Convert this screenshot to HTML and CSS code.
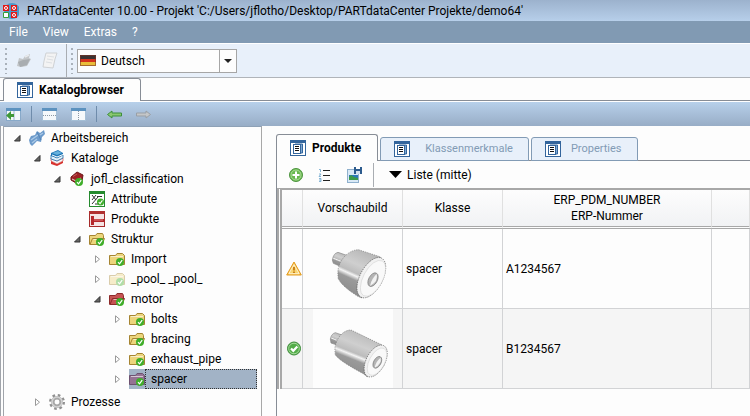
FILE: index.html
```html
<!DOCTYPE html>
<html lang="de">

<head>
  <meta charset="UTF-8">
  <meta name="viewport" content="width=device-width, initial-scale=1.0">
  <title>PARTdataCenter</title>
  <link rel="stylesheet" href="styles.css">
</head>

<body>

  <!-- shared icons -->
  <svg class="sprite" aria-hidden="true">
    <symbol id="check" viewBox="0 0 8 8">
      <circle cx="4" cy="4" r="4" fill="#3fae2a"/>
      <path d="M2 4.2 L3.5 5.8 L6.2 2.2" fill="none" stroke="#fff" stroke-width="1.2"/>
    </symbol>
    <symbol id="folder" viewBox="0 0 16 16">
      <path d="M.5 13.500 V4.500 H6.500 L8 2.500 H13.500 L15.500 4.500 V13.500 Z" fill="currentColor"/>
      <path d="M2 5.500 H14" stroke="#ffffff99"/>
      <use href="#check" x="7" y="7" width="8" height="8" stroke="none"/>
    </symbol>
    <symbol id="folder-open" viewBox="0 0 16 16">
      <path d="M.5 13.500 V4.500 H6.500 L8 2.500 H13.500 L14.500 4.500 V8" fill="currentColor"/>
      <path d="M1 13.500 L3.500 7.500 H15.500 L13 13.500 Z" fill="currentColor"/>
      <path d="M4.500 8.500 H14" stroke="#ffffff99"/>
      <use href="#check" x="7" y="7" width="8" height="8" stroke="none"/>
    </symbol>
    <symbol id="page" viewBox="0 0 16 16">
      <rect x=".5" y=".5" width="15" height="15" fill="#fff" stroke="#33659c"/>
      <rect width="16" height="3" fill="#33659c"/>
      <path d="M5 4 H12.500 V13 H11" fill="#7fa9d3" stroke="#33659c"/>
      <rect x="3.500" y="4.500" width="7" height="9" fill="#fff" stroke="#33659c"/>
      <path d="M5 6.500 H9 M5 8.500 H9 M5 10.500 H9" stroke="#111"/>
    </symbol>
    <symbol id="open" viewBox="0 0 8 8">
      <path d="M1.500 7 L7 1.500 V7 Z" fill="#666" stroke="#333"/>
    </symbol>
    <symbol id="closed" viewBox="0 0 8 8">
      <path d="M2.500 .8 L6.500 4.200 L2.500 7.600 Z" fill="#fff" stroke="#999"/>
    </symbol>
    <symbol id="gear" viewBox="0 0 16 16">
      <circle cx="8" cy="8" r="6.500" fill="none" stroke="#909090" stroke-width="3" stroke-dasharray="2.500 2.600"/>
      <circle cx="8" cy="8" r="4.200" fill="none" stroke="#a8a8a8" stroke-width="3.500"/>
      <circle cx="8" cy="8" r="5" fill="none" stroke="#d4d4d4" stroke-width="1.500"/>
    </symbol>
  </svg>

  <header class="titlebar">
    <svg width="16" height="16" viewBox="0 0 16 16">
      <circle cx="9" cy="8" r="8" fill="#4b9ac9"/>
      <path d="M0 2 H6 V8 H0 Z M8 2 H14 V8 H8 Z M8 9 H14 V15 H8 Z" fill="#e01818"/>
      <path d="M.5 9.500 H5.500 V14.500 H.5 Z" fill="#fff" stroke="#35a03a"/>
      <g fill="none" stroke="#fff"><circle cx="3" cy="5" r="1.500"/><circle cx="11" cy="5" r="1.500"/><circle cx="11" cy="12" r="1.500"/></g>
    </svg>
    <span>PARTdataCenter 10.00 - Projekt 'C:/Users/jflotho/Desktop/PARTdataCenter Projekte/demo64'</span>
  </header>

  <nav class="menu">
    <button>File</button>
    <button>View</button>
    <button>Extras</button>
    <button>?</button>
  </nav>

  <div class="toolbar">
    <span class="grip"></span>
    <button class="tool" aria-label="Öffnen">
      <svg width="16" height="16" viewBox="0 0 16 16">
        <path d="M1 13 L3 5 L7 6 L9 3 L14 1 L13 5 L15 6 L11 13 L5 14 Z" fill="#c3c6c9"/>
        <path d="M2 9 L7 7 L14 6 L11 12 L4 14 Z" fill="#a9adb0"/>
        <path d="M9 4 L13 2" stroke="#e8eaec" stroke-width="1.500"/>
      </svg>
    </button>
    <button class="tool" aria-label="Dokument">
      <svg width="18" height="18" viewBox="0 0 18 18">
        <path d="M5 1 H16 L14 7 L12 16 L2 15 L3 9 Z" fill="#f3f3f3" stroke="#cfd2d5"/>
        <path d="M6 4 L13 5 M6 7 L12 8 M5 10 L11 11" stroke="#dcdfe2"/>
      </svg>
    </button>
    <span class="divider"></span>
    <span class="grip"></span>
    <div class="combo">
      <svg width="16" height="11" viewBox="0 0 16 11">
        <rect width="16" height="4" fill="#3b3232"/>
        <rect y="4" width="16" height="3" fill="#d3331d"/>
        <rect y="7" width="16" height="4" fill="#e9bd3a"/>
        <rect x=".5" y=".5" width="15" height="10" fill="none" stroke="#7a3325" opacity=".6"/>
      </svg>
      <select aria-label="Sprache">
        <option>Deutsch</option>
      </select>
      <span class="combo-arrow"><svg width="8" height="4" viewBox="0 0 8 4"><path d="M0 0 H8 L4 4 Z" fill="#222"/></svg></span>
    </div>
  </div>

  <div class="tabs main-tabs">
    <button class="tab active"><svg width="16" height="16"><use href="#page"/></svg>Katalogbrowser</button>
  </div>

  <div class="viewbar">
    <button aria-label="Baum">
      <svg width="15" height="13" viewBox="0 0 15 13">
        <rect x=".5" y=".5" width="14" height="12" fill="#f2f7fb" stroke="#88a9c9"/>
        <rect width="15" height="3" fill="#5c92bf"/>
        <path d="M8 3 V12" stroke="#9ab5cd"/>
        <path d="M0 7.500 L5 3 V6 H8 V9 H5 V12 Z" fill="#3f9838"/>
      </svg>
    </button>
    <span class="line"></span>
    <button aria-label="Horizontal teilen">
      <svg width="15" height="13" viewBox="0 0 15 13">
        <rect x=".5" y=".5" width="14" height="12" fill="#f6f9fb" stroke="#a5bfd6"/>
        <rect width="15" height="3" fill="#5c92bf"/>
        <path d="M1 7.500 H14" stroke="#8c98a4" stroke-dasharray="1 1"/>
      </svg>
    </button>
    <button aria-label="Vertikal teilen">
      <svg width="15" height="13" viewBox="0 0 15 13">
        <rect x=".5" y=".5" width="14" height="12" fill="#f6f9fb" stroke="#a5bfd6"/>
        <rect width="15" height="3" fill="#5c92bf"/>
        <path d="M7.500 3 V12" stroke="#8c98a4" stroke-dasharray="1 1"/>
      </svg>
    </button>
    <span class="line"></span>
    <button aria-label="Zurück">
      <svg width="15" height="9" viewBox="0 0 15 9"><path d="M.5 4.500 L5 1 V3 H14.500 V6 H5 V8 Z" fill="#8ac76f" stroke="#3d8f3a"/></svg>
    </button>
    <button aria-label="Vor">
      <svg width="15" height="9" viewBox="0 0 15 9"><path d="M14.500 4.500 L10 1 V3 H.5 V6 H10 V8 Z" fill="#c4c6c8" stroke="#999fa5"/></svg>
    </button>
  </div>

  <main class="content">

    <nav class="tree">
      <ul>
        <li>
          <div class="row">
            <svg class="arrow"><use href="#open"/></svg>
            <svg class="icon" viewBox="0 0 16 16">
              <path d="M0 10 L2 6 L6 5 L8 1 L11 3 L15 0 L16 4 L13 7 L12 12 L8 11 L3 16 L1 14 Z" fill="#6d9bcb"/>
              <path d="M2 10 L9 5 M11 5 L14 3 M3 13 L8 9" stroke="#a9c8e6" stroke-width="1.500"/>
              <path d="M8 2 L12 10" stroke="#5484b6"/>
            </svg>
            <span>Arbeitsbereich</span>
          </div>
          <ul>
            <li>
              <div class="row">
                <svg class="arrow"><use href="#open"/></svg>
                <svg class="icon" viewBox="0 0 16 16">
                  <path d="M2 11 L8 14 L14 11 V13 L8 16 L2 14 Z" fill="#d8322e"/>
                  <path d="M2 8 L8 11 L14 8 V11 L8 14 L2 11 Z" fill="#f4f6f8" stroke="#c9302c" stroke-width=".6"/>
                  <path d="M2 5 L8 8 L14 5 V8 L8 11 L2 9 Z" fill="#e5f2fa" stroke="#1d69a5" stroke-width=".8"/>
                  <path d="M2 3 L9 0 L14 3 V5 L8 8 L2 6 Z" fill="#1c75b5"/>
                  <path d="M3 3 L9 1 L13 3 L8 5 Z" fill="#66b1dc"/>
                  <path d="M3 5 L8 7 L14 4.500" stroke="#fff" fill="none"/>
                </svg>
                <span>Kataloge</span>
              </div>
              <ul>
                <li>
                  <div class="row classification">
                    <svg class="arrow"><use href="#open"/></svg>
                    <svg class="icon" viewBox="0 0 16 16">
                      <path d="M2 6 L8 1 L14 4 L13 10 L7 12 L2 9 Z" fill="#9c2225" stroke="#6d1719"/>
                      <path d="M3 8 L7 10 L12 7" fill="none" stroke="#f0d5d5"/>
                      <path d="M4 5.500 L8 3" stroke="#c95b5b"/>
                      <use href="#check" x="6" y="7" width="8" height="8"/>
                    </svg>
                    <span>jofl_classification</span>
                  </div>
                  <ul>
                    <li>
                      <div class="row">
                        <span class="arrow"></span>
                        <svg class="icon" viewBox="0 0 16 16">
                          <rect x=".5" y=".5" width="15" height="15" fill="#fff" stroke="#258a2e"/>
                          <rect width="16" height="3" fill="#258a2e"/>
                          <path d="M3 4 L7 9 M7 4 L3 9 M3 13 L9 6 M8 5.500 H13 M6 13 H9" stroke="#333"/>
                          <use href="#check" x="8" y="7" width="7" height="8"/>
                        </svg>
                        <span>Attribute</span>
                      </div>
                    </li>
                    <li>
                      <div class="row">
                        <span class="arrow"></span>
                        <svg class="icon" viewBox="0 0 16 16">
                          <rect x=".5" y=".5" width="15" height="15" fill="#f4e4e4" stroke="#a52a2a"/>
                          <rect width="16" height="3" fill="#b03030"/>
                          <path d="M2 5 H5 V8 H15 V11 H5 V14 H2 Z" fill="#b5282c"/>
                          <path d="M5 9 H14" stroke="#df7a7a"/>
                        </svg>
                        <span>Produkte</span>
                      </div>
                    </li>
                    <li>
                      <div class="row">
                        <svg class="arrow"><use href="#open"/></svg>
                        <svg class="icon yellow"><use href="#folder-open"/></svg>
                        <span>Struktur</span>
                      </div>
                      <ul>
                        <li>
                          <div class="row">
                            <svg class="arrow"><use href="#closed"/></svg>
                            <svg class="icon yellow"><use href="#folder"/></svg>
                            <span>Import</span>
                          </div>
                        </li>
                        <li>
                          <div class="row">
                            <svg class="arrow"><use href="#closed"/></svg>
                            <svg class="icon yellow faded"><use href="#folder"/></svg>
                            <span>_pool_ _pool_</span>
                          </div>
                        </li>
                        <li>
                          <div class="row">
                            <svg class="arrow"><use href="#open"/></svg>
                            <svg class="icon red"><use href="#folder-open"/></svg>
                            <span>motor</span>
                          </div>
                          <ul>
                            <li>
                              <div class="row">
                                <svg class="arrow"><use href="#closed"/></svg>
                                <svg class="icon yellow"><use href="#folder"/></svg>
                                <span>bolts</span>
                              </div>
                            </li>
                            <li>
                              <div class="row">
                                <span class="arrow"></span>
                                <svg class="icon yellow"><use href="#folder-open"/></svg>
                                <span>bracing</span>
                              </div>
                            </li>
                            <li>
                              <div class="row">
                                <svg class="arrow"><use href="#closed"/></svg>
                                <svg class="icon yellow"><use href="#folder"/></svg>
                                <span>exhaust_pipe</span>
                              </div>
                            </li>
                            <li>
                              <div class="row selected">
                                <svg class="arrow"><use href="#closed"/></svg>
                                <svg class="icon purple"><use href="#folder"/></svg>
                                <span>spacer</span>
                              </div>
                            </li>
                          </ul>
                        </li>
                      </ul>
                    </li>
                  </ul>
                </li>
              </ul>
            </li>
            <li>
              <div class="row process">
                <svg class="arrow"><use href="#closed"/></svg>
                <svg class="icon"><use href="#gear"/></svg>
                <span>Prozesse</span>
              </div>
            </li>
          </ul>
        </li>
      </ul>
    </nav>

    <section class="details">
      <div class="tabs">
        <button class="tab active"><svg width="16" height="16"><use href="#page"/></svg>Produkte</button>
        <button class="tab wide"><svg width="16" height="16"><use href="#page"/></svg>Klassenmerkmale</button>
        <button class="tab"><svg width="16" height="16"><use href="#page"/></svg>Properties</button>
      </div>

      <div class="panel">
        <div class="panel-bar">
          <button aria-label="Hinzufügen">
            <svg width="14" height="14" viewBox="0 0 14 14">
              <circle cx="7" cy="7" r="6.500" fill="#69b84f" stroke="#4e9440"/>
              <circle cx="7" cy="7" r="5" fill="none" stroke="#a9dc95"/>
              <path d="M7 3.500 V10.500 M3.500 7 H10.500" stroke="#fff" stroke-width="2"/>
            </svg>
          </button>
          <button aria-label="Nummerierte Liste">
            <svg width="14" height="14" viewBox="0 0 14 14">
              <path d="M5 2.500 H12 M5 7.500 H12 M5 12.500 H12" stroke="#222"/>
              <path d="M1 1.500 H2.500 V4 M1 6 H3 L1 8.500 H3 M1 10.500 H3 V13.500 H1 M1 12 H3" fill="none" stroke="#6aa3cc" stroke-width=".8"/>
            </svg>
          </button>
          <button aria-label="Bild speichern">
            <svg width="15" height="16" viewBox="0 0 15 16">
              <rect x=".5" y="2.500" width="11" height="13" fill="#d9e9f6" stroke="#8fb0cd"/>
              <rect x="2" y="8" width="9" height="5" fill="#2b78b8"/>
              <path d="M2 13 V10 L4 8 L7 10 L11 11 V13 Z" fill="#3c9a48"/>
              <rect x="7" y="0" width="8" height="7" fill="#2c5b8d"/>
              <rect x="9" y="0" width="4" height="2" fill="#fff"/>
              <rect x="9" y="4" width="4" height="3" fill="#d3e0ee"/>
            </svg>
          </button>
          <span class="divider"></span>
          <button class="view-mode"><svg width="13" height="7" viewBox="0 0 13 7"><path d="M0 0 H13 L6.500 7 Z" fill="#000"/></svg>Liste (mitte)</button>
        </div>

        <table>
          <colgroup>
            <col class="col-status">
            <col class="col-image">
            <col class="col-class">
            <col class="col-erp">
            <col>
          </colgroup>
          <thead>
            <tr>
              <th></th>
              <th>Vorschaubild</th>
              <th>Klasse</th>
              <th>ERP_PDM_NUMBER<br>ERP-Nummer</th>
              <th></th>
            </tr>
          </thead>
          <tbody>
            <tr>
              <td class="status">
                <svg width="16" height="15" viewBox="0 0 16 15">
                  <path d="M8 1 L15.300 14 H.7 Z" fill="#f5bf45" stroke="#e39b20" stroke-linejoin="round"/>
                  <path d="M8 3.500 L13.200 12.700 H2.800 Z" fill="#f9d673" stroke="#fff" stroke-width=".7"/>
                  <path d="M8 6 V9.500 M8 10.500 V12" stroke="#c57a10" stroke-width="1.800"/>
                </svg>
              </td>
              <td class="preview">
                <svg width="80" height="79" viewBox="129 -1 240 237">
                  <defs>
                    <linearGradient id="steel" x1="0.700" y1="0" x2="0.300" y2="1">
                      <stop offset="0" stop-color="#b4b4b4"/>
                      <stop offset=".35" stop-color="#cfcfcf"/>
                      <stop offset=".52" stop-color="#bcbcbc"/>
                      <stop offset=".57" stop-color="#f4f4f4"/>
                      <stop offset=".65" stop-color="#9a9a9a"/>
                      <stop offset="1" stop-color="#8a8a8a"/>
                    </linearGradient>
                  </defs>
                  <path d="M187 92 Q190 72 204 69 L230 78 L214 112 L190 102 Z" fill="url(#steel)" stroke="#888" stroke-width="2"/>
                  <path d="M205 148 Q198 108 225 80 Q244 62 265 61 L332 83 L275 206 L262 200 Q215 170 205 148 Z" fill="url(#steel)" stroke="#777" stroke-width="2" stroke-dasharray="4 3"/>
                  <ellipse cx="304" cy="145" rx="34" ry="66" transform="rotate(28 304 145)" fill="#f1f1f1" stroke="#555" stroke-width="2" stroke-dasharray="4 3"/>
                  <ellipse cx="309" cy="147" rx="29" ry="59" transform="rotate(28 309 147)" fill="#f9f9f9" stroke="#bbb" stroke-width="1"/>
                  <ellipse cx="309" cy="151" rx="13" ry="22" transform="rotate(28 309 151)" fill="#b4b4b4" stroke="#777" stroke-width="2"/>
                  <path d="M300 170 Q304 148 320 134 Q326 156 300 170 Z" fill="#f2f2f2"/>
                </svg>
              </td>
              <td>spacer</td>
              <td>A1234567</td>
              <td></td>
            </tr>
            <tr>
              <td class="status">
                <svg width="16" height="15" viewBox="0 0 16 15">
                  <circle cx="8" cy="7.500" r="6.500" fill="#52ad48" stroke="#3e8b3b"/>
                  <circle cx="8" cy="7.500" r="5.300" fill="none" stroke="#a6d99b"/>
                  <path d="M5 7.500 L7.300 9.800 L11.300 5.500" fill="none" stroke="#fff" stroke-width="2.200"/>
                </svg>
              </td>
              <td class="preview">
                <svg width="80" height="79" viewBox="129 238 240 237">
                  <path d="M181 328 Q184 312 196 309 L216 316 L204 347 L183 340 Z" fill="url(#steel)" stroke="#888" stroke-width="2"/>
                  <path d="M196 375 Q190 342 212 316 Q226 301 243 301 L336 346 L292 442 L280 432 Q205 392 196 375 Z" fill="url(#steel)" stroke="#777" stroke-width="2" stroke-dasharray="4 3"/>
                  <ellipse cx="317" cy="394" rx="28" ry="52" transform="rotate(28 317 394)" fill="#f1f1f1" stroke="#555" stroke-width="2" stroke-dasharray="4 3"/>
                  <ellipse cx="321" cy="396" rx="23" ry="45" transform="rotate(28 321 396)" fill="#f9f9f9" stroke="#bbb" stroke-width="1"/>
                  <ellipse cx="322" cy="398" rx="11" ry="19" transform="rotate(28 322 398)" fill="#b4b4b4" stroke="#777" stroke-width="2"/>
                  <path d="M314 414 Q318 394 332 384 Q336 402 314 414 Z" fill="#f2f2f2"/>
                </svg>
              </td>
              <td>spacer</td>
              <td>B1234567</td>
              <td></td>
            </tr>
          </tbody>
        </table>
      </div>
    </section>

  </main>

</body>

</html>
```

FILE: styles.css
```css
* {
  box-sizing: border-box;
}

body {
  margin: 0;
  height: 100vh;
  display: flex;
  flex-direction: column;
  overflow: hidden;
  background-color: #fdfdfd;
  color: #000;
  font-family: Roboto, "Open Sans", sans-serif;
  font-size: 12px;
  line-height: 16px;
}

button,
select {
  font: inherit;
  color: inherit;
  background: none;
  border: none;
  padding: 0;
}

svg {
  display: block;
  flex-shrink: 0;
}

ul {
  list-style: none;
  margin: 0;
  padding: 0;
}

.sprite {
  position: absolute;
  width: 0;
  height: 0;
}

/* window head */

.titlebar {
  display: flex;
  align-items: center;
  gap: 8px;
  height: 21px;
  flex-shrink: 0;
  padding-left: 3px;
  background: linear-gradient(#9cb2cd, #b7cfea);
  white-space: nowrap;
}

.menu {
  display: flex;
  align-items: center;
  gap: 15px;
  height: 22px;
  flex-shrink: 0;
  padding-left: 9px;
  background-color: #819ab3;
  color: #fff;
}

.toolbar {
  display: flex;
  align-items: center;
  height: 35px;
  flex-shrink: 0;
  padding-left: 5px;
  background-color: #e8f0fa;
  border-top: 1px solid #fff;
  border-bottom: 1px solid #b0b4b9;
}

.grip {
  width: 2px;
  height: 26px;
  background: repeating-linear-gradient(#a9b1ba 0 2px, transparent 2px 5px);
}

.tool {
  margin-left: 9px;
}

.divider {
  width: 1px;
  height: 33px;
  background-color: #a9adb2;
}

.toolbar .divider {
  margin: 0 4px 0 7px;
}

.combo {
  display: flex;
  align-items: center;
  width: 160px;
  height: 24px;
  margin-left: 4px;
  padding-left: 2px;
  background-color: #fdfdfd;
  border: 1px solid #a6a6a6;
}

.combo select {
  flex: 1;
  appearance: none;
  padding-left: 5px;
}

.combo-arrow {
  display: flex;
  align-items: center;
  justify-content: center;
  width: 17px;
  height: 22px;
  border-left: 1px solid #a6a6a6;
}

/* tabs */

.tabs {
  display: flex;
  align-items: flex-end;
  gap: 2px;
  flex-shrink: 0;
  box-shadow: inset 0 -1px #878d96;
}

.tab {
  display: flex;
  align-items: center;
  gap: 10px;
  height: 24px;
  padding: 0 15px 0 13px;
  border: 1px solid #829bb5;
  border-radius: 3px 3px 0 0;
  background-color: #e8f0fa;
  color: #829bb5;
  font-size: 11px;
}

.tab.wide {
  gap: 15px;
}

.tab.active {
  gap: 6px;
  height: 27px;
  padding: 0 16px 0 13px;
  border-color: #878d96;
  border-bottom: none;
  background-color: #fdfdfd;
  color: #000;
  font-size: 12px;
  font-weight: bold;
}

.main-tabs {
  padding-left: 3px;
}

.main-tabs .tab.active {
  height: 23px;
}

.viewbar {
  display: flex;
  align-items: center;
  gap: 14px;
  height: 25px;
  flex-shrink: 0;
  padding-left: 6px;
  border-top: 1px solid #fff;
  background: linear-gradient(#b7d0ea, #98adc6);
}

.viewbar .line {
  width: 1px;
  height: 16px;
  margin: 0 -4px;
  background-color: #6f8cab;
}

/* tree */

.content {
  display: flex;
  flex: 1;
  min-height: 0;
  border-left: 4px double #a0a4aa;
}

.tree {
  width: 258px;
  flex-shrink: 0;
  padding: 1px 4px 0 9px;
  border-top: 1px solid #8ea1b6;
  border-right: 1px solid #a8a8a8;
}

.tree ul ul {
  padding-left: 20px;
}

.row {
  display: flex;
  align-items: center;
  height: 20px;
}

.row span {
  padding: 0 6px;
}

.classification {
  height: 21px;
}

.process {
  height: 25px;
}

.row .arrow {
  width: 8px;
  height: 8px;
  padding: 0;
  margin-right: 8px;
}

.icon {
  width: 16px;
  height: 16px;
}

.yellow {
  color: #ecd57c;
  stroke: #a58432;
}

.red {
  color: #c65353;
  stroke: #8d2b2b;
}

.purple {
  color: #957393;
  stroke: #6d5170;
}

.faded {
  opacity: 0.4;
}

.selected .icon {
  height: 20px;
  background-color: #a2b3c6;
}

.selected span:last-child {
  flex: 1;
  padding: 1px 5px;
  border: 1px dotted #333;
  background-color: #a2b3c6;
}

/* right side */

.details {
  display: flex;
  flex-direction: column;
  flex: 1;
  min-width: 0;
  padding: 8px 0 0 14px;
}

.panel {
  flex: 1;
  min-height: 0;
  border-left: 1px solid #878d96;
}

.panel-bar {
  display: flex;
  align-items: center;
  gap: 15px;
  height: 27px;
  padding-left: 12px;
}

.panel-bar .divider {
  height: 24px;
  margin-left: -4px;
}

.view-mode {
  display: flex;
  align-items: center;
  gap: 5px;
}

table {
  width: 100%;
  table-layout: fixed;
  border-collapse: separate;
  border-spacing: 0;
  border-top: 2px solid #a8a8a8;
  border-left: 5px double #a8a8a8;
}

.col-status {
  width: 21px;
}

.col-image,
.col-class {
  width: 100px;
}

.col-erp {
  width: 209px;
}

th {
  height: 39px;
  padding: 0;
  border-right: 1px solid #e0e0e0;
  border-bottom: 3px double #a8a8a8;
  background: linear-gradient(#fdfdfd, #f1f2f4);
  font-weight: normal;
}

td {
  height: 80px;
  padding: 0 3px;
  border-right: 1px solid #d2d3d5;
  border-bottom: 1px solid #d2d3d5;
}

tbody tr:nth-child(even) {
  background-color: #f5f5f5;
}

td.status {
  padding: 0 0 0 4px;
}

td.preview {
  padding: 0 9px 0 10px;
}

.preview svg {
  background-color: #fdfdfd;
}
```
